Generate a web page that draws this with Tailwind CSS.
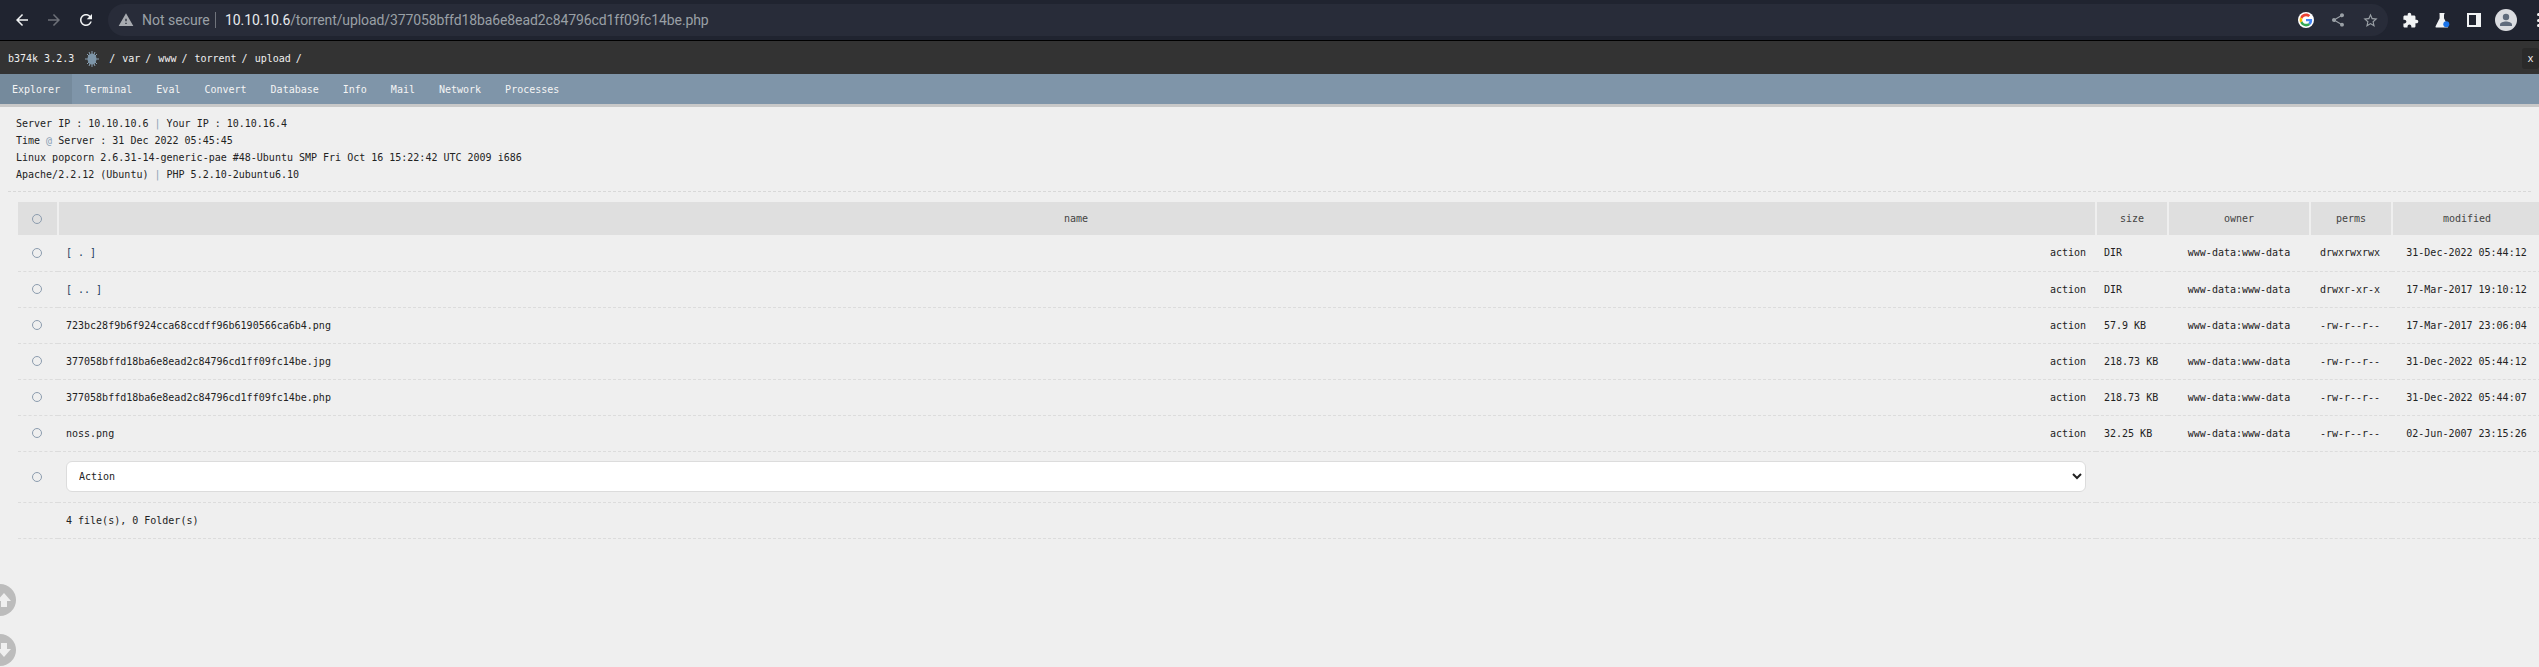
<!DOCTYPE html>
<html lang="en">
<head>
    <meta charset="UTF-8">
    <title>b374k 3.2.3</title>
    <script src="https://cdn.jsdelivr.net/npm/@tailwindcss/browser@4"></script>
</head>
<body class="bg-[#efefef] h-screen overflow-hidden relative font-['DejaVu_Sans_Mono',monospace] text-[10px] text-[#222]">
    <!-- browser toolbar -->
    <div class="h-10 bg-[#202430] flex items-center pl-1.5 font-['Roboto',sans-serif]">
        <div class="w-8 h-8 shrink-0 flex items-center justify-center">
            <svg class="w-[18px] h-[18px]" viewBox="0 0 24 24" fill="#f1f3f4"><path d="M20 11H7.83l5.59-5.59L12 4l-8 8 8 8 1.41-1.41L7.83 13H20v-2z"/></svg>
        </div>
        <div class="w-8 h-8 shrink-0 flex items-center justify-center">
            <svg class="w-[18px] h-[18px]" viewBox="0 0 24 24" fill="#6d7078"><path d="M4 11h12.17l-5.59-5.59L12 4l8 8-8 8-1.41-1.41L16.17 13H4v-2z"/></svg>
        </div>
        <div class="w-8 h-8 shrink-0 flex items-center justify-center">
            <svg class="w-[18px] h-[18px]" viewBox="0 0 24 24" fill="#f1f3f4"><path d="M17.65 6.35C16.2 4.9 14.21 4 12 4c-4.42 0-7.99 3.58-7.99 8s3.57 8 7.99 8c3.73 0 6.84-2.55 7.73-6h-2.08c-.82 2.33-3.04 4-5.65 4-3.31 0-6-2.69-6-6s2.69-6 6-6c1.66 0 3.14.69 4.22 1.78L13 11h7V4l-2.35 2.35z"/></svg>
        </div>
        <div class="ml-1.5 w-[2280px] h-8 shrink-0 rounded-full bg-[#282c39] flex items-center">
            <svg class="ml-[10px] w-4 h-4 shrink-0" viewBox="0 0 24 24" fill="#a8abb0"><path d="M1 21h22L12 2 1 21zm12-3h-2v-2h2v2zm0-4h-2v-4h2v4z"/></svg>
            <span class="ml-2 text-[14px] text-[#9aa0a6] w-[66px] whitespace-nowrap">Not secure</span>
            <span class="ml-[7px] w-px h-4 bg-[#70747c]"></span>
            <span class="ml-[9px] text-[14px] tracking-[-0.1px] whitespace-nowrap text-[#e8eaed]">10.10.10.6<span class="text-[#9aa0a6]">/torrent/upload/377058bffd18ba6e8ead2c84796cd1ff09fc14be.php</span></span>
            <div class="ml-auto flex items-center pr-[2px]">
                <div class="w-8 h-8 flex items-center justify-center">
                    <svg class="w-4 h-4 rounded-full bg-white" viewBox="-6 -6 60 60"><path fill="#EA4335" d="M24 9.5c3.54 0 6.71 1.22 9.21 3.6l6.85-6.85C35.9 2.38 30.47 0 24 0 14.62 0 6.51 5.38 2.56 13.22l7.98 6.19C12.43 13.72 17.74 9.5 24 9.5z"/><path fill="#4285F4" d="M46.98 24.55c0-1.57-.15-3.09-.38-4.55H24v9.02h12.94c-.58 2.96-2.26 5.48-4.78 7.18l7.73 6c4.51-4.18 7.09-10.36 7.09-17.65z"/><path fill="#FBBC05" d="M10.53 28.59c-.48-1.45-.76-2.99-.76-4.59s.27-3.14.76-4.59l-7.98-6.19C.92 16.46 0 20.12 0 24c0 3.88.92 7.54 2.56 10.78l7.97-6.19z"/><path fill="#34A853" d="M24 48c6.48 0 11.93-2.13 15.89-5.81l-7.73-6c-2.15 1.45-4.92 2.3-8.16 2.3-6.26 0-11.57-4.22-13.47-9.91l-7.98 6.19C6.51 42.62 14.62 48 24 48z"/></svg>
                </div>
                <div class="w-8 h-8 flex items-center justify-center">
                    <svg class="w-[16px] h-[16px]" viewBox="0 0 24 24" fill="#9aa0a6"><path d="M18 16.08c-.76 0-1.44.3-1.96.77L8.91 12.7c.05-.23.09-.46.09-.7s-.04-.47-.09-.7l7.05-4.11c.54.5 1.25.81 2.04.81 1.66 0 3-1.34 3-3s-1.34-3-3-3-3 1.34-3 3c0 .24.04.47.09.7L8.04 9.81C7.5 9.31 6.79 9 6 9c-1.66 0-3 1.34-3 3s1.34 3 3 3c.79 0 1.5-.31 2.04-.81l7.12 4.16c-.05.21-.08.43-.08.65 0 1.61 1.31 2.92 2.92 2.92 1.61 0 2.92-1.31 2.92-2.92s-1.31-2.92-2.92-2.92z"/></svg>
                </div>
                <div class="w-8 h-8 flex items-center justify-center">
                    <svg class="w-[17px] h-[17px]" viewBox="0 0 24 24" fill="#9aa0a6"><path d="M22 9.24l-7.19-.62L12 2 9.19 8.63 2 9.24l5.46 4.73L5.82 21 12 17.27 18.18 21l-1.63-7.03L22 9.24zM12 15.4l-3.76 2.27 1-4.28-3.32-2.88 4.38-.38L12 6.1l1.71 4.04 4.38.38-3.32 2.88 1 4.28L12 15.4z"/></svg>
                </div>
            </div>
        </div>
        <div class="ml-1.5 flex items-center shrink-0">
            <div class="w-8 h-8 flex items-center justify-center">
                <svg class="w-[17px] h-[17px]" viewBox="0 0 24 24" fill="#f1f3f4"><path d="M20.5 11H19V7c0-1.1-.9-2-2-2h-4V3.5C13 2.12 11.88 1 10.5 1S8 2.12 8 3.5V5H4c-1.1 0-1.99.9-1.99 2v3.8H3.5c1.49 0 2.7 1.21 2.7 2.7s-1.21 2.7-2.7 2.7H2V20c0 1.1.9 2 2 2h3.8v-1.5c0-1.49 1.21-2.7 2.7-2.7 1.49 0 2.7 1.21 2.7 2.7V22H17c1.1 0 2-.9 2-2v-4h1.5c1.38 0 2.5-1.12 2.5-2.5S21.88 11 20.5 11z"/></svg>
            </div>
            <div class="w-8 h-8 flex items-center justify-center">
                <svg class="w-[16px] h-[16px]" viewBox="0 0 16 16"><path fill="#f1f3f4" d="M5.5 1h5v1.2H10v4l4 8c.3.7-.1 1.3-.9 1.3H2.5c-.8 0-1.2-.6-.9-1.3l4-8v-4h-.1z"/><circle cx="12.3" cy="12.3" r="3" fill="#1a73e8"/></svg>
            </div>
            <div class="w-8 h-8 flex items-center justify-center">
                <div class="w-[14px] h-[14px] bg-[#f1f3f4] pl-[2px] py-[2px] pr-[5px]"><div class="w-full h-full bg-[#202430]"></div></div>
            </div>
            <div class="w-8 h-8 flex items-center justify-center">
                <svg class="w-[22px] h-[22px]" viewBox="0 0 22 22"><circle cx="11" cy="11" r="11" fill="#dadce0"/><circle cx="11" cy="8" r="3.2" fill="#5f6b7c"/><path fill="#5f6b7c" d="M5 17v-1.5C5 13.3 8.5 12.4 11 12.4s6 .9 6 3.1V17z"/></svg>
            </div>
            <div class="w-8 h-8 flex flex-col items-center justify-center gap-[2.5px]">
                <span class="w-[3px] h-[3px] rounded-full bg-[#f1f3f4]"></span>
                <span class="w-[3px] h-[3px] rounded-full bg-[#f1f3f4]"></span>
                <span class="w-[3px] h-[3px] rounded-full bg-[#f1f3f4]"></span>
            </div>
        </div>
    </div>
    <div class="h-px bg-black"></div>

    <!-- b374k header -->
    <div class="h-[33px] bg-[#333] flex items-center pl-2 pt-0.5 text-[#f0f0f0] relative">
        <span>b374k 3.2.3</span>
        <svg class="ml-2.5 w-4 h-[18px]" viewBox="0 0 16 18" stroke="#8aa0b2" fill="#7d95a8">
            <path stroke-width="1" d="M8 1v16M1 9h14M3 4l10 10M13 4L3 14M5 2l6 14M11 2L5 16"/>
            <ellipse cx="8" cy="9" rx="4.5" ry="5.5" stroke="none"/>
        </svg>
        <span class="ml-[9px]">/</span>
        <span class="ml-[7px]">var</span>
        <span class="ml-[5px]">/</span>
        <span class="ml-[7px]">www</span>
        <span class="ml-[5px]">/</span>
        <span class="ml-[7px]">torrent</span>
        <span class="ml-[5px]">/</span>
        <span class="ml-[7px]">upload</span>
        <span class="ml-[5px]">/</span>
        <div class="absolute right-0 top-[7px] w-[17px] h-[21px] bg-[#2a2a2a] rounded-[3px] flex items-center justify-center">x</div>
    </div>

    <!-- nav -->
    <div class="h-[33px] bg-[#7f95a9] border-b-[3px] border-[#c8c8c8] flex text-[#f4f4f4]">
        <div class="px-3 flex items-center bg-[#758a9c]">Explorer</div>
        <div class="px-3 flex items-center">Terminal</div>
        <div class="px-3 flex items-center">Eval</div>
        <div class="px-3 flex items-center">Convert</div>
        <div class="px-3 flex items-center">Database</div>
        <div class="px-3 flex items-center">Info</div>
        <div class="px-3 flex items-center">Mail</div>
        <div class="px-3 flex items-center">Network</div>
        <div class="px-3 flex items-center">Processes</div>
    </div>

    <!-- server info -->
    <div class="mx-2 pt-2 pl-2 h-[85px] border-b border-dashed border-[#d8d8d8] leading-[17px]">
        <div>Server IP : 10.10.10.6 <span class="text-[#8aa0b5]">|</span> Your IP : 10.10.16.4</div>
        <div>Time <span class="text-[#8aa0b5]">@</span> Server : 31 Dec 2022 05:45:45</div>
        <div>Linux popcorn 2.6.31-14-generic-pae #48-Ubuntu SMP Fri Oct 16 15:22:42 UTC 2009 i686</div>
        <div>Apache/2.2.12 (Ubuntu) <span class="text-[#8aa0b5]">|</span> PHP 5.2.10-2ubuntu6.10</div>
    </div>

    <!-- file table -->
    <table class="ml-[18px] mt-2.5 w-[2523px] table-fixed border-collapse">
        <colgroup>
            <col class="w-[40px]"><col class="w-[2038px]"><col class="w-[72px]"><col class="w-[142px]"><col class="w-[82px]"><col class="w-[149px]">
        </colgroup>
        <thead>
            <tr class="h-[33px] text-[#444]">
                <th class="font-normal bg-[#dfdfdf] border-r-2 border-[#efefef] pr-0.5"><span class="block mx-auto w-2.5 h-2.5 rounded-full border border-[#8c9cae]"></span></th>
                <th class="font-normal bg-[#dfdfdf] border-r-2 border-[#efefef] pr-0.5">name</th>
                <th class="font-normal bg-[#dfdfdf] border-r-2 border-[#efefef]">size</th>
                <th class="font-normal bg-[#dfdfdf] border-r-2 border-[#efefef]">owner</th>
                <th class="font-normal bg-[#dfdfdf] border-r-2 border-[#efefef]">perms</th>
                <th class="font-normal bg-[#dfdfdf]">modified</th>
            </tr>
        </thead>
        <tbody>
            <tr class="h-9 border-b border-dashed border-[#dcdcdc]">
                <td class="pr-0.5"><span class="block mx-auto w-2.5 h-2.5 rounded-full border border-[#8c9cae]"></span></td>
                <td class="pl-2 pr-2.5"><div class="flex justify-between"><span class="text-[#1a3c5e]">[ . ]</span><span>action</span></div></td>
                <td class="pl-2">DIR</td>
                <td class="text-center">www-data:www-data</td>
                <td class="text-center pr-0.5">drwxrwxrwx</td>
                <td class="text-center">31-Dec-2022 05:44:12</td>
            </tr>
            <tr class="h-9 border-b border-dashed border-[#dcdcdc]">
                <td class="pr-0.5"><span class="block mx-auto w-2.5 h-2.5 rounded-full border border-[#8c9cae]"></span></td>
                <td class="pl-2 pr-2.5"><div class="flex justify-between"><span class="text-[#1a3c5e]">[ .. ]</span><span>action</span></div></td>
                <td class="pl-2">DIR</td>
                <td class="text-center">www-data:www-data</td>
                <td class="text-center pr-0.5">drwxr-xr-x</td>
                <td class="text-center">17-Mar-2017 19:10:12</td>
            </tr>
            <tr class="h-9 border-b border-dashed border-[#dcdcdc]">
                <td class="pr-0.5"><span class="block mx-auto w-2.5 h-2.5 rounded-full border border-[#8c9cae]"></span></td>
                <td class="pl-2 pr-2.5"><div class="flex justify-between"><span>723bc28f9b6f924cca68ccdff96b6190566ca6b4.png</span><span>action</span></div></td>
                <td class="pl-2">57.9 KB</td>
                <td class="text-center">www-data:www-data</td>
                <td class="text-center pr-0.5">-rw-r--r--</td>
                <td class="text-center">17-Mar-2017 23:06:04</td>
            </tr>
            <tr class="h-9 border-b border-dashed border-[#dcdcdc]">
                <td class="pr-0.5"><span class="block mx-auto w-2.5 h-2.5 rounded-full border border-[#8c9cae]"></span></td>
                <td class="pl-2 pr-2.5"><div class="flex justify-between"><span>377058bffd18ba6e8ead2c84796cd1ff09fc14be.jpg</span><span>action</span></div></td>
                <td class="pl-2">218.73 KB</td>
                <td class="text-center">www-data:www-data</td>
                <td class="text-center pr-0.5">-rw-r--r--</td>
                <td class="text-center">31-Dec-2022 05:44:12</td>
            </tr>
            <tr class="h-9 border-b border-dashed border-[#dcdcdc]">
                <td class="pr-0.5"><span class="block mx-auto w-2.5 h-2.5 rounded-full border border-[#8c9cae]"></span></td>
                <td class="pl-2 pr-2.5"><div class="flex justify-between"><span>377058bffd18ba6e8ead2c84796cd1ff09fc14be.php</span><span>action</span></div></td>
                <td class="pl-2">218.73 KB</td>
                <td class="text-center">www-data:www-data</td>
                <td class="text-center pr-0.5">-rw-r--r--</td>
                <td class="text-center">31-Dec-2022 05:44:07</td>
            </tr>
            <tr class="h-9 border-b border-dashed border-[#dcdcdc]">
                <td class="pr-0.5"><span class="block mx-auto w-2.5 h-2.5 rounded-full border border-[#8c9cae]"></span></td>
                <td class="pl-2 pr-2.5"><div class="flex justify-between"><span>noss.png</span><span>action</span></div></td>
                <td class="pl-2">32.25 KB</td>
                <td class="text-center">www-data:www-data</td>
                <td class="text-center pr-0.5">-rw-r--r--</td>
                <td class="text-center">02-Jun-2007 23:15:26</td>
            </tr>
            <tr class="h-[51px] border-b border-dashed border-[#dcdcdc]">
                <td class="pr-0.5"><span class="block mx-auto w-2.5 h-2.5 rounded-full border border-[#8c9cae]"></span></td>
                <td class="pl-2 pr-2.5">
                    <select class="w-full h-[31px] bg-white border border-[#dcdcdc] rounded-[6px] pl-2 outline-none text-[10px] font-['DejaVu_Sans_Mono',monospace] text-[#222]">
                        <option>Action</option>
                    </select>
                </td>
                <td colspan="4"></td>
            </tr>
            <tr class="h-9 border-b border-dashed border-[#dcdcdc]">
                <td></td>
                <td class="pl-2" colspan="5">4 file(s), 0 Folder(s)</td>
            </tr>
        </tbody>
    </table>

    <!-- scroll buttons, cut off by the left edge -->
    <div class="fixed left-[-16px] top-[584px] w-8 h-8 rounded-full bg-[#bcbcbc] flex items-center justify-center">
        <svg class="w-6 h-6 ml-2" viewBox="0 0 24 24" fill="#efefef"><path d="M12 5l-7 8h4v6h6v-6h4z"/></svg>
    </div>
    <div class="fixed left-[-16px] top-[634px] w-8 h-8 rounded-full bg-[#bcbcbc] flex items-center justify-center">
        <svg class="w-6 h-6 ml-2" viewBox="0 0 24 24" fill="#efefef"><path d="M12 19l-7-8h4V5h6v6h4z"/></svg>
    </div>
</body>
</html>
